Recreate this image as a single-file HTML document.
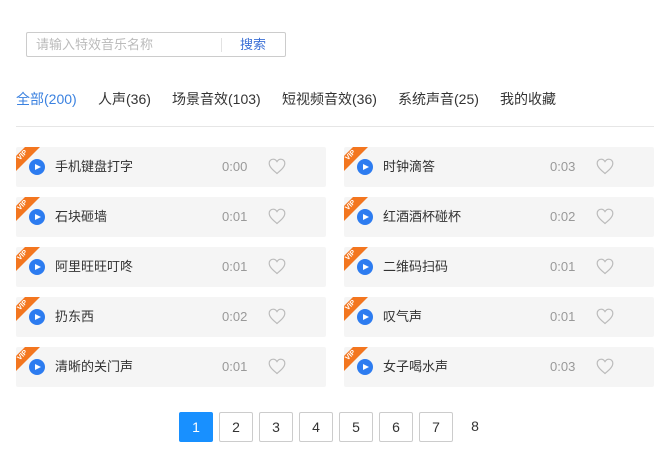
<!DOCTYPE html>
<html><head><meta charset="utf-8"><style>
*{margin:0;padding:0;box-sizing:border-box}
body{width:672px;height:469px;background:#fff;font-family:"Liberation Sans","Noto Sans CJK SC",sans-serif;position:relative;overflow:hidden;color:#333}
.search{position:absolute;left:26px;top:32px;width:260px;height:25px;border:1px solid #ccc;border-radius:2px}
.search .ph{position:absolute;left:9px;top:0;line-height:23px;font-size:13px;color:#bbb}
.search .div{position:absolute;left:194px;top:5px;width:1px;height:14px;background:#e2e2e2}
.search .btn{position:absolute;left:213px;top:0;line-height:23px;font-size:13px;color:#3b6fd6}
.tabs{position:absolute;top:89px;left:16px;font-size:14px;white-space:nowrap;line-height:20px}
.tabs span{position:absolute;top:0}
.line{position:absolute;left:16px;top:126px;width:638px;height:1px;background:#e6e6e6}
.card{position:absolute;width:310px;height:40px;background:#f5f5f5;border-radius:2px;overflow:hidden}
.vip{position:absolute;left:0;top:0;width:26px;height:26px;background:#f3761f;clip-path:polygon(0 9px,9px 0,24px 0,0 24px)}
.vip i{position:absolute;left:1px;top:5px;font-style:normal;font-size:7px;color:#fff;font-weight:bold;transform:rotate(-45deg)}
.play{position:absolute;left:13px;top:12px;width:16px;height:16px;border-radius:50%;background:#2d7cf0}
.play:after{content:"";position:absolute;left:6px;top:4.5px;border-left:6px solid #fff;border-top:3.5px solid transparent;border-bottom:3.5px solid transparent}
.name{position:absolute;left:39px;top:0;line-height:40px;font-size:13px;color:#333}
.time{position:absolute;left:206px;top:0;line-height:40px;font-size:13px;color:#999}
.heart{position:absolute;left:252px;top:11px}
.pg{position:absolute;top:412px;width:34px;height:30px;border:1px solid #ccc;border-radius:2px;text-align:center;line-height:28px;font-size:14px;color:#333}
</style></head><body>
<div class="search"><span class="ph">请输入特效音乐名称</span><span class="div"></span><span class="btn">搜索</span></div>
<div class="tabs">
<span style="left:0;color:#3b82e0">全部(200)</span>
<span style="left:82px">人声(36)</span>
<span style="left:156px">场景音效(103)</span>
<span style="left:266px">短视频音效(36)</span>
<span style="left:382px">系统声音(25)</span>
<span style="left:484px">我的收藏</span>
</div>
<div class="line"></div>
<div id="cards"></div>
<script>
var L=["手机键盘打字","石块砸墙","阿里旺旺叮咚","扔东西","清晰的关门声"],Lt=["0:00","0:01","0:01","0:02","0:01"];
var R=["时钟滴答","红酒酒杯碰杯","二维码扫码","叹气声","女子喝水声"],Rt=["0:03","0:02","0:01","0:01","0:03"];
var h="",heart='<svg class="heart" width="18" height="17" viewBox="0 0 18 17"><path d="M9 15.5C5 12 1.2 9 1.2 5.2 1.2 2.8 3 1.2 5.1 1.2 6.8 1.2 8.2 2.3 9 3.6 9.8 2.3 11.2 1.2 12.9 1.2 15 1.2 16.8 2.8 16.8 5.2 16.8 9 13 12 9 15.5Z" fill="none" stroke="#bbb" stroke-width="1.2"/></svg>';
for(var i=0;i<5;i++){[[16,L,Lt],[344,R,Rt]].forEach(function(c){h+='<div class="card" style="left:'+c[0]+'px;top:'+(147+i*50)+'px"><div class="vip"><i>VIP</i></div><div class="play"></div><span class="name">'+c[1][i]+'</span><span class="time">'+c[2][i]+'</span>'+heart+'</div>';});}
document.getElementById("cards").innerHTML=h;
</script>
<div class="pg" style="left:179px;background:#1890ff;border-color:#1890ff;color:#fff">1</div>
<div class="pg" style="left:219px">2</div>
<div class="pg" style="left:259px">3</div>
<div class="pg" style="left:299px">4</div>
<div class="pg" style="left:339px">5</div>
<div class="pg" style="left:379px">6</div>
<div class="pg" style="left:419px">7</div>
<div class="pg" style="left:458px;border:none">8</div>
</body></html>
